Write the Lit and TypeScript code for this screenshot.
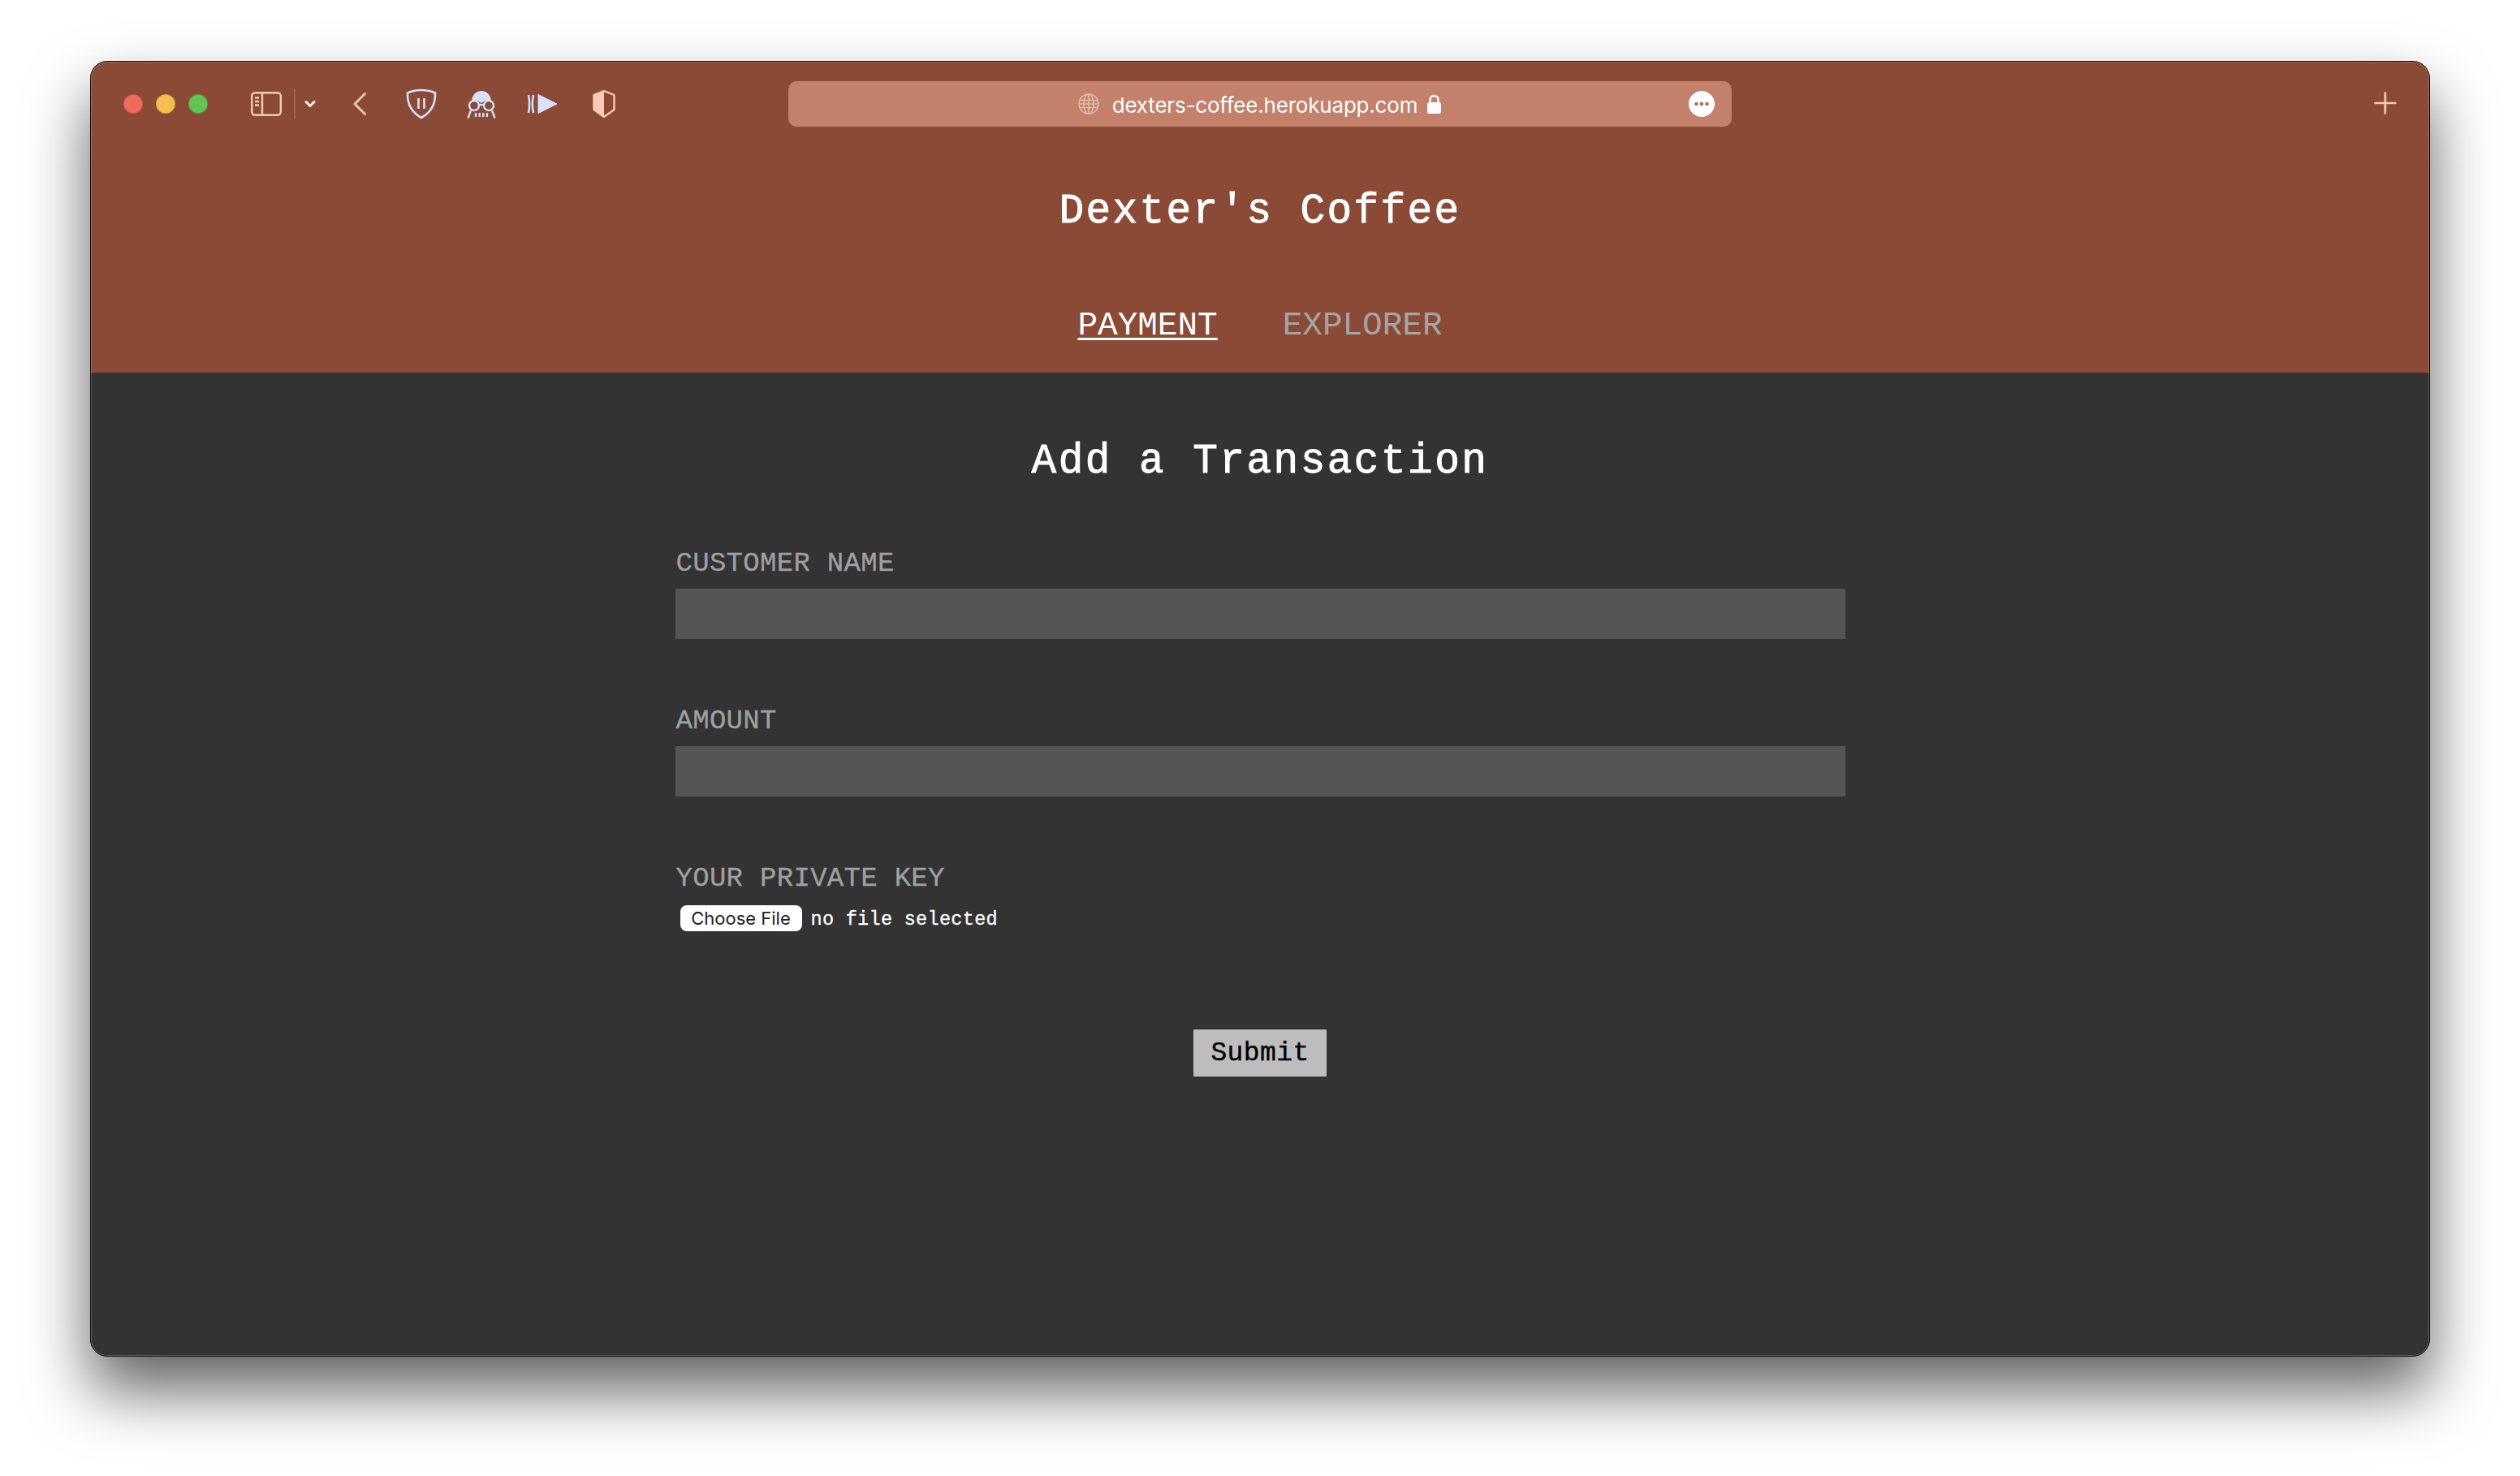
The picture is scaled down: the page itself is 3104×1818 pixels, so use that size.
import {html, css, LitElement} from 'lit';
import {customElement} from 'lit/decorators.js';

@customElement('app-root')
export class AppRoot extends LitElement {
  static styles = css`
    :host {
      display: block;
      width: 3104px;
      height: 1818px;
      background: #fff;
      overflow: hidden;
      font-family: "Liberation Mono", monospace;
    }
    * { box-sizing: border-box; margin: 0; padding: 0; }
    .stage {
      padding: 75px 111px 0 111px;
    }
    .window {
      height: 1596px;
      background: #333;
      border: 1px solid #111;
      border-radius: 21px;
      overflow: hidden;
      box-shadow: 0 42px 78px rgba(0,0,0,.62);
      position: relative;
    }
    .window::after {
      content: "";
      position: absolute;
      inset: 0;
      border: 1px solid rgba(255,255,255,.2);
      border-radius: 20px;
      pointer-events: none;
    }
    header {
      height: 383px;
      background: #8b4a35;
      display: flex;
      flex-direction: column;
      align-items: center;
    }
    .toolbar {
      align-self: stretch;
      height: 104px;
      display: flex;
      align-items: center;
      padding-left: 40px;
      flex: none;
    }
    .light { width: 24px; height: 24px; border-radius: 50%; margin-right: 16px; border: 1px solid rgba(0,0,0,.16); }
    .red { background: #ee6a5f; }
    .yellow { background: #f5bf4f; }
    .green { background: #61c454; }
    svg { display: block; flex: none; }
    .sidebar { margin-left: 37px; }
    .divider { width: 2px; height: 36px; background: #a3614c; margin-left: 15px; }
    .chevron { margin-left: 11px; }
    .back { margin-left: 46px; }
    .guard { margin-left: 49px; }
    .spy { margin-left: 37px; }
    .forward { margin-left: 38px; }
    .half { margin-left: 44px; }
    .address {
      margin-left: 213px;
      width: 1162px;
      height: 56px;
      background: #c3806a;
      border-radius: 10px;
      display: flex;
      align-items: center;
      justify-content: center;
      position: relative;
      color: #fff;
      font: 26px "Inter", "Liberation Sans", sans-serif;
      letter-spacing: -.2px;
    }
    .address .host { margin: 0 11px 0 16px; padding-top: 2px; }
    .dots { position: absolute; right: 21px; top: 12px; }
    .plus { margin: -2px 40px 0 auto; }
    h1 {
      font-size: 51px;
      font-weight: 400;
      line-height: 60px;
      letter-spacing: 2.4px;
      color: #fff;
      margin-top: 51px;
      -webkit-text-stroke: .9px #fff;
    }
    nav {
      display: flex;
      gap: 80px;
      margin-top: 87px;
      font-size: 41px;
      line-height: 46px;
    }
    nav a { color: #a5a5a5; text-decoration: none; }
    nav a.active { color: #fff; text-decoration: underline; text-decoration-thickness: 3px; text-underline-offset: 4px; }
    main {
      width: 1441px;
      margin: 0 auto;
      display: flex;
      flex-direction: column;
    }
    h2 {
      font-size: 51px;
      font-weight: 400;
      line-height: 60px;
      letter-spacing: 2.5px;
      color: #fff;
      text-align: center;
      margin-top: 80px;
      -webkit-text-stroke: .9px #fff;
    }
    label {
      display: block;
      font-size: 34px;
      line-height: 40px;
      letter-spacing: .3px;
      padding-left: 1px;
      color: #a0a0a0;
      -webkit-text-stroke: .3px #a0a0a0;
    }
    .field { margin-top: 75px; }
    .field + .field { margin-top: 81px; }
    .input { height: 62px; background: #555; margin-top: 11px; }
    .file { display: flex; align-items: center; margin-top: 13px; padding-left: 6px; }
    .choose {
      width: 150px;
      height: 32px;
      background: #fff;
      color: #222;
      border-radius: 8px;
      border: none;
      font: 22px "Inter", "Liberation Sans", sans-serif;
    }
    .none { font-size: 23.5px; letter-spacing: .3px; color: #fff; margin: 3px 0 0 11px; -webkit-text-stroke: .3px #fff; }
    .submit {
      align-self: center;
      margin-top: 121px;
      width: 164px;
      height: 58px;
      background: #bdbdbd;
      border: none;
      border-radius: 1px;
      color: #000;
      font-family: "Liberation Mono", monospace;
      font-size: 33px;
      letter-spacing: .4px;
      -webkit-text-stroke: .4px #000;
    }
  `;

  render() {
    return html`
      <div class="stage">
        <div class="window">
          <header>
            <div class="toolbar">
              <span class="light red"></span>
              <span class="light yellow"></span>
              <span class="light green"></span>
              <svg class="sidebar" width="38" height="30" viewBox="0 0 38 30" fill="none" stroke="#ffc9b5" stroke-width="2.4">
                <rect x="1.2" y="1.2" width="35.6" height="27.6" rx="4"/>
                <path d="M14 1.2v27.6M5 7.5h5M5 12h5M5 16.5h5"/>
              </svg>
              <span class="divider"></span>
              <svg class="chevron" width="14" height="10" viewBox="0 0 14 10" fill="none" stroke="#fff2e0" stroke-width="3" stroke-linecap="round" stroke-linejoin="round">
                <path d="M2 2.5l5 5 5-5"/>
              </svg>
              <svg class="back" width="16" height="28" viewBox="0 0 16 28" fill="none" stroke="#ffc9b5" stroke-width="2.8" stroke-linecap="round" stroke-linejoin="round">
                <path d="M14.5 1.5L2 14l12.5 12.5"/>
              </svg>
              <svg class="guard" width="38" height="38" viewBox="0 0 38 38" fill="none" stroke="#d8e2ff" stroke-width="2.6">
                <path d="M19 2C12 2 6 3.5 2 5.5 1.5 18 6 29 19 36 32 29 36.500 18 36 5.500 32 3.500 26 2 19 2z" stroke-linejoin="round"/>
                <path d="M15.500 12v13M22.500 12v13"/>
              </svg>
              <svg class="spy" width="36" height="35" viewBox="0 0 36 35">
                <path d="M6 13C7 5 12 1 18 1s11 4 12 12c-3-1-8-1-12 3-4-4-9-4-12-3z" fill="#d8e2ff"/>
                <g fill="none" stroke="#d8e2ff" stroke-width="2.400">
                  <circle cx="9" cy="19" r="6"/>
                  <circle cx="27" cy="19" r="6"/>
                  <path d="M15 18h6M5 25L1.500 34.500M31 25l3.500 9.500"/>
                  <path d="M11 28v5M15.700 28v5M20.300 28v5M25 28v5"/>
                </g>
              </svg>
              <svg class="forward" width="37" height="24" viewBox="0 0 37 24">
                <path d="M14 0.500L37 12 14 23.500z" fill="#d8e2ff" stroke="#d8e2ff" stroke-linejoin="round"/>
                <path d="M2 1c1.500 7 1.500 15 0 22M8 1c-1.500 7-1.500 15 0 22" fill="none" stroke="#d8e2ff" stroke-width="2.500"/>
              </svg>
              <svg class="half" width="28" height="34" viewBox="0 0 28 34">
                <path d="M14 1L1.500 6v18L14 33z" fill="#ffc9b5"/>
                <path d="M14 1l12.500 5v18L14 33 1.500 24V6z" fill="none" stroke="#ffc9b5" stroke-width="2.400" stroke-linejoin="round"/>
              </svg>
              <div class="address">
                <svg width="26" height="26" viewBox="0 0 26 26" fill="none" stroke="#e3bcae" stroke-width="1.500">
                  <circle cx="13" cy="13" r="12"/>
                  <ellipse cx="13" cy="13" rx="6" ry="12"/>
                  <path d="M13 1v24M2 8.500h22M1 13h24M2 17.500h22"/>
                </svg>
                <span class="host">dexters-coffee.herokuapp.com</span>
                <svg width="19" height="26" viewBox="0 0 19 26">
                  <path d="M4.500 12V8a5 5 0 0 1 10 0v4" fill="none" stroke="#fff" stroke-width="2.400"/>
                  <rect x="1" y="11" width="17" height="14" rx="2.500" fill="#fff"/>
                </svg>
                <svg class="dots" width="32" height="32" viewBox="0 0 32 32">
                  <circle cx="16" cy="16" r="16" fill="#fff"/>
                  <circle cx="9.500" cy="16" r="2.300" fill="#b0715c"/>
                  <circle cx="16" cy="16" r="2.300" fill="#b0715c"/>
                  <circle cx="22.500" cy="16" r="2.300" fill="#b0715c"/>
                </svg>
              </div>
              <svg class="plus" width="28" height="28" viewBox="0 0 28 28" fill="none" stroke="#ffc9b5" stroke-width="2.600" stroke-linecap="round">
                <path d="M14 1.500v25M1.500 14h25"/>
              </svg>
            </div>
            <h1>Dexter's Coffee</h1>
            <nav>
              <a class="active" href="#">PAYMENT</a>
              <a href="#">EXPLORER</a>
            </nav>
          </header>
          <main>
            <h2>Add a Transaction</h2>
            <div class="field">
              <label>CUSTOMER NAME</label>
              <div class="input"></div>
            </div>
            <div class="field">
              <label>AMOUNT</label>
              <div class="input"></div>
            </div>
            <div class="field">
              <label>YOUR PRIVATE KEY</label>
              <div class="file">
                <button class="choose">Choose File</button>
                <span class="none">no file selected</span>
              </div>
            </div>
            <button class="submit">Submit</button>
          </main>
        </div>
      </div>
    `;
  }
}
